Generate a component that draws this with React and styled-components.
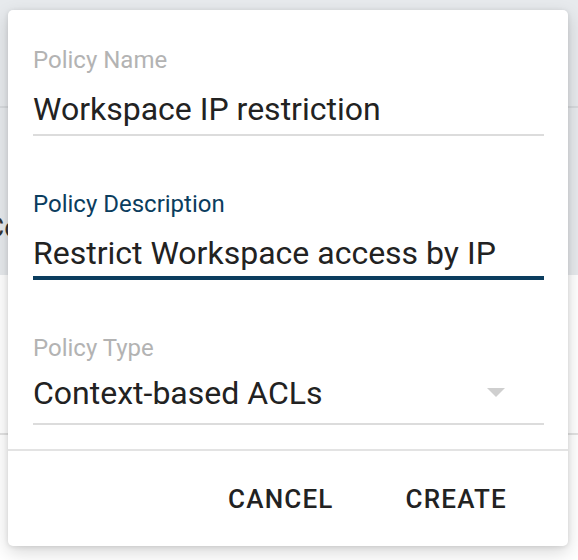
import React from "react";
import styled, { createGlobalStyle } from "styled-components";

const Global = createGlobalStyle`
  html, body { margin: 0; padding: 0; background: #ffffff; }
  body { font-family: Roboto, "Noto Sans", "Liberation Sans", sans-serif; }
  * { box-sizing: border-box; }
`;

const Page = styled.div`
  position: relative;
  width: 578px;
  height: 560px;
  overflow: hidden;
  background: #ffffff;
`;

const TopBand = styled.div`
  height: 108px;
  background: #e7eaed;
  border-bottom: 2px solid #d7dadd;
`;

const GreyBand = styled.div`
  height: 167px;
  background: #e7eaed;
  display: flex;
  align-items: flex-end;
  padding-bottom: 30px;
`;

const BgText = styled.span`
  font-size: 28px;
  line-height: 34px;
  color: #333;
  margin-left: -14px;
`;

const WhiteBand = styled.div`
  height: 160px;
  border-bottom: 2px solid #e2e2e2;
`;

const Dialog = styled.div`
  position: absolute;
  top: 10px;
  left: 8px;
  width: 560px;
  background: #ffffff;
  border-radius: 5px;
  box-shadow: 0 6px 18px rgba(0, 0, 0, 0.16), 0 1px 5px rgba(0, 0, 0, 0.1);
  display: flex;
  flex-direction: column;
`;

const Content = styled.div`
  padding: 36px 24px 24px 25px;
  display: flex;
  flex-direction: column;
  gap: 54px;
`;

const Field = styled.div`
  display: flex;
  flex-direction: column;
  gap: ${(p) => (p.$select ? "12px" : "16px")};
`;

const Label = styled.div`
  font-size: 24px;
  line-height: 28px;
  color: ${(p) => (p.$focused ? "#0b3d5e" : "#b3b3b3")};
`;

const InputBox = styled.div`
  position: relative;
  display: flex;
  align-items: center;
  justify-content: space-between;
  padding-bottom: ${(p) => (p.$select ? "11px" : "6px")};
  border-bottom: 2px solid #dcdcdc;
  &::after {
    content: "";
    display: ${(p) => (p.$focused ? "block" : "none")};
    position: absolute;
    left: 0;
    right: 0;
    bottom: -2px;
    height: 4px;
    background: #0b3d5e;
  }
`;

const Value = styled.span`
  font-size: 32px;
  line-height: 38px;
  color: #222222;
  white-space: nowrap;
`;

const Arrow = styled.svg`
  width: 18px;
  height: 9px;
  margin-right: 39px;
  margin-top: -2px;
  fill: #cfcfcf;
`;

const Divider = styled.div`
  height: 2px;
  background: #e3e3e3;
`;

const Footer = styled.div`
  height: 95px;
  display: flex;
  align-items: center;
  justify-content: flex-end;
  gap: 36px;
  padding: 0 43px 0 0;
`;

const Button = styled.button`
  border: none;
  background: transparent;
  font-family: Roboto, "Noto Sans", sans-serif;
  font-weight: 500;
  font-size: 26px;
  letter-spacing: 1.2px;
  line-height: 40px;
  color: #222222;
  padding: 0 18px;
  text-transform: uppercase;
  cursor: pointer;
`;

export default function App() {
  return (
    <Page>
      <Global />
      <TopBand />
      <GreyBand>
        <BgText>Co</BgText>
      </GreyBand>
      <WhiteBand />
      <Dialog>
        <Content>
          <Field>
            <Label>Policy Name</Label>
            <InputBox>
              <Value>Workspace IP restriction</Value>
            </InputBox>
          </Field>
          <Field>
            <Label $focused>Policy Description</Label>
            <InputBox $focused>
              <Value>Restrict Workspace access by IP</Value>
            </InputBox>
          </Field>
          <Field $select>
            <Label>Policy Type</Label>
            <InputBox $select>
              <Value>Context-based ACLs</Value>
              <Arrow viewBox="0 0 18 9">
                <path d="M0 0 L18 0 L9 9 Z" />
              </Arrow>
            </InputBox>
          </Field>
        </Content>
        <Divider />
        <Footer>
          <Button>Cancel</Button>
          <Button>Create</Button>
        </Footer>
      </Dialog>
    </Page>
  );
}
